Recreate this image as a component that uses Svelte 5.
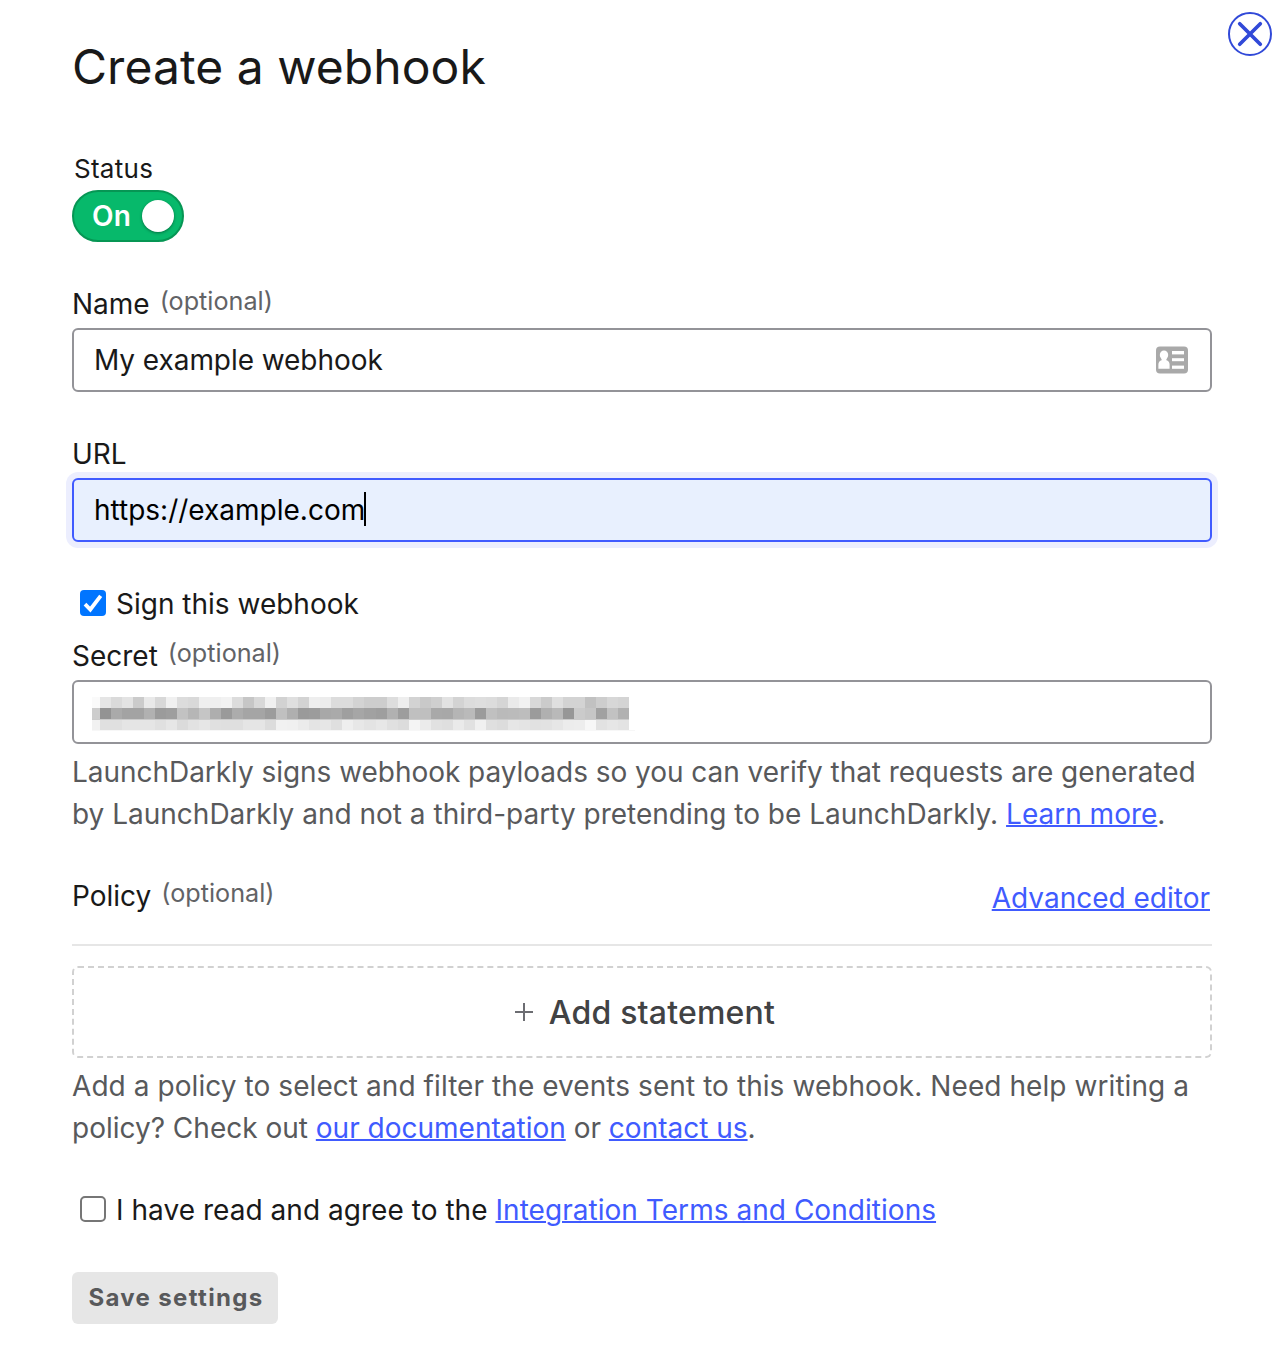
<script>
  // Gray levels of the obscured secret, one two-digit hex value per mosaic cell.
  const levels = [
    'fa e5 da e3 cb e9 d8 f0 dc d9 ef ef f2 dc c6 d8 f0 d2 df d3 ee ec dc dc d3 cd cd dd ee d3 c9 cf e2 d3 dc de dc d5 ea f1 d8 cb df d3 d3 c1 cd d7 d4',
    'cd 93 aa a3 a3 b1 9b 9e c2 b6 c5 ae 9a ac a5 a5 9c c0 af 9a 9c a8 aa 9f a6 a1 9e b1 9d c0 bf a9 a8 b5 ba 9b c0 ba bb bd 9b b0 b9 97 cb c6 a1 c2 b1',
    'f1 e0 e0 e5 e5 e5 e0 e6 db e2 e6 e0 df df e5 e5 dc f1 f0 eb e4 e6 df ee e7 e3 e7 e0 dc f4 eb e1 df ea e1 f0 df dc e6 e4 e1 e2 e6 ec ed f7 e2 e6 e3'
  ];
  const rowTop = [0, 11, 23];
  const rowHeight = [11, 11, 10];
  const step = 11.02;
  const cells = levels.flatMap((row, r) =>
    row.split(' ').map((g, i) => ({
      x: i === 0 ? 0 : Math.round(8 + (i - 1) * step),
      y: rowTop[r],
      w: i === 0 ? 8 : Math.round(8 + i * step) - Math.round(8 + (i - 1) * step),
      h: rowHeight[r],
      fill: `#${g}${g}${g}`
    }))
  );
</script>

<main>
  <button class="close" aria-label="Close">
    <svg width="44" height="44" viewBox="0 0 44 44" fill="none" stroke="#3149d8">
      <circle cx="22" cy="22" r="21" stroke-width="2" />
      <path d="M11.7 11.7 32.3 32.3M32.3 11.7 11.7 32.3" stroke-width="3.7" stroke-linecap="round" />
    </svg>
  </button>

  <h1>Create a webhook</h1>

  <div class="status">Status</div>
  <div class="toggle"><span>On</span><i></i></div>

  <div class="label"><span>Name</span><small>(optional)</small></div>
  <div class="field">
    <span class="name">My example webhook</span>
    <svg class="card" width="32" height="28" viewBox="0 0 32 28">
      <rect y="0.400" width="32" height="27" rx="4" fill="#a9a9a9" />
      <g fill="#fff">
        <ellipse cx="8" cy="9" rx="4.2" ry="4.5" />
        <path d="M5.600 12h4.800v2.200c2 .5 3.200 1.900 3.200 4.300V22.800H2.400v-4.300c0-2.400 1.200-3.800 3.200-4.300z" />
        <rect x="16" y="5" width="12" height="3.400" />
        <rect x="16" y="12.200" width="12" height="3" />
        <rect x="16" y="19.600" width="12" height="3.200" />
      </g>
    </svg>
  </div>

  <div class="label url"><span>URL</span></div>
  <div class="field focused"><span>https://example.com</span><b class="caret"></b></div>

  <div class="check">
    <svg width="26" height="26" viewBox="0 0 26 26">
      <rect width="26" height="26" rx="4" fill="#0075ff" />
      <path d="M5 14.200 10.300 19.500 20.700 5.800" fill="none" stroke="#fff" stroke-width="3.800" />
    </svg>
    <span>Sign this webhook</span>
  </div>

  <div class="label secret"><span>Secret</span><small>(optional)</small></div>
  <div class="field masked">
    <svg width="543" height="35" viewBox="0 0 543 35" shape-rendering="crispEdges">
      {#each cells as c}
        <rect x={c.x} y={c.y} width={c.w} height={c.h} fill={c.fill} />
      {/each}
      <rect x="0" y="22" width="537" height="1" fill="#cbcbcb" />
      <rect x="0" y="33" width="543" height="1" fill="#f7f7f7" />
    </svg>
  </div>
  <p class="help">
    <span class="tight">LaunchDarkly signs webhook payloads so you can verify that requests are generated</span><br />by LaunchDarkly and not a third-party pretending to be LaunchDarkly. <a href="#learn">Learn more</a>.
  </p>

  <div class="policy">
    <div class="label"><span>Policy</span><small>(optional)</small></div>
    <a href="#editor">Advanced editor</a>
  </div>
  <button class="add">
    <svg width="20" height="20" viewBox="0 0 20 20" stroke="#6c6d72" stroke-width="2">
      <path d="M10 1v18M1 10h18" />
    </svg>
    <span>Add statement</span>
  </button>
  <p class="help">
    <span class="loose">Add a policy to select and filter the events sent to this webhook. Need help writing a</span><br />policy? Check out <a href="#docs">our documentation</a> or <a href="#contact">contact us</a>.
  </p>

  <div class="check terms">
    <svg width="26" height="26" viewBox="0 0 26 26">
      <rect x="1" y="1" width="24" height="24" rx="4" fill="#fff" stroke="#767676" stroke-width="2" />
    </svg>
    <span>I have read and agree to the <a href="#terms">Integration Terms and Conditions</a></span>
  </div>

  <button class="save">Save settings</button>
</main>

<style>
  :global(body) {
    background: #fff;
  }
  main {
    position: relative;
    box-sizing: border-box;
    width: 1280px;
    height: 1350px;
    padding: 37px 68px 0 72px;
    font: 28px/32px Inter, sans-serif;
    color: #191919;
    white-space: nowrap;
    overflow: hidden;
  }
  button {
    padding: 0;
    border: 0;
    background: none;
    font: inherit;
    letter-spacing: inherit;
  }
  svg {
    display: block;
    flex: none;
  }
  a {
    color: #405bff;
    text-decoration: underline;
    text-decoration-thickness: 2px;
  }
  .close {
    position: absolute;
    top: 12px;
    right: 8px;
  }
  h1 {
    margin: 0;
    font-size: 48px;
    font-weight: 400;
    line-height: 60px;
    letter-spacing: 0.05px;
  }
  .status {
    margin-top: 56px;
    padding-left: 2px;
    font-size: 26px;
    letter-spacing: 0.28px;
  }
  .toggle {
    display: flex;
    align-items: center;
    justify-content: space-between;
    box-sizing: border-box;
    width: 112px;
    height: 52px;
    margin-top: 5px;
    padding: 0 8px 0 18px;
    border: 2px solid #069654;
    border-radius: 26px;
    background: #07b96b;
    color: #fff;
    font-weight: 600;
    letter-spacing: 0.28px;
  }
  .toggle i {
    width: 32px;
    height: 32px;
    border-radius: 50%;
    background: #fff;
    box-shadow: 0 1px 3px rgba(0, 0, 0, 0.4);
  }
  .label {
    display: flex;
    height: 32px;
    margin-top: 46px;
  }
  .label small {
    margin-left: 10px;
    color: #626366;
    font-size: 25.2px;
    line-height: 27px;
  }
  .label.secret {
    margin-top: 20px;
  }
  .field {
    display: flex;
    align-items: center;
    box-sizing: border-box;
    height: 64px;
    margin-top: 8px;
    padding: 0 22px 0 20px;
    border: 2px solid #939398;
    border-radius: 6px;
  }
  .name {
    letter-spacing: -0.06px;
  }
  .card {
    margin-left: auto;
  }
  .focused {
    border-color: #405bff;
    background: #e8f0fe;
    color: #000;
    box-shadow: 0 0 0 6px #eceefe;
  }
  .caret {
    width: 2px;
    height: 34px;
    margin: 0 0 2px -1px;
    background: #000;
  }
  .masked {
    align-items: flex-start;
    padding: 15px 0 0 18px;
  }
  .check {
    display: flex;
    gap: 10px;
    height: 32px;
    margin-top: 46px;
    padding-left: 8px;
  }
  .check svg {
    margin-top: 2px;
  }
  .help {
    margin: 7px 0 0;
    color: #58595b;
    line-height: 42px;
  }
  .tight {
    letter-spacing: -0.04px;
  }
  .loose {
    letter-spacing: 0.07px;
  }
  .policy {
    display: flex;
    justify-content: space-between;
    height: 64px;
    margin-top: 45px;
    padding-right: 2px;
    border-bottom: 2px solid #e6e6e6;
  }
  .policy .label {
    margin-top: 0;
  }
  .policy a {
    height: 32px;
    margin-top: 2px;
  }
  .add {
    display: flex;
    align-items: center;
    justify-content: center;
    gap: 15px;
    box-sizing: border-box;
    width: 100%;
    height: 92px;
    margin-top: 20px;
    padding-left: 5px;
    border: 2px dashed #d1d1d1;
    border-radius: 6px;
    color: #414244;
    font-size: 32px;
    font-weight: 500;
    letter-spacing: 0.2px;
  }
  .add span {
    padding-top: 2px;
  }
  .terms {
    margin-top: 45px;
    letter-spacing: 0.04px;
  }
  .save {
    display: block;
    width: 206px;
    height: 52px;
    margin-top: 46px;
    padding-left: 2px;
    border-radius: 6px;
    background: #e6e6e6;
    color: #58595b;
    font-size: 24px;
    font-weight: 700;
    letter-spacing: 1.35px;
  }
</style>
